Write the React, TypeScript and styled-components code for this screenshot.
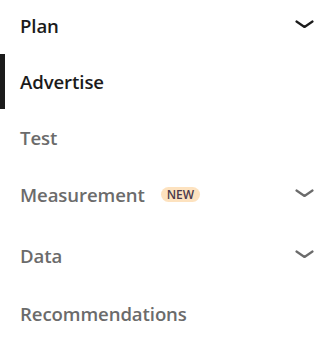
import styled, { createGlobalStyle } from 'styled-components';

const GlobalStyle = createGlobalStyle`
  html, body {
    margin: 0;
    padding: 0;
    background: #ffffff;
  }

  body {
    font-family: 'Open Sans', 'Noto Sans', sans-serif;
  }
`;

const StyledNav = styled.nav`
  width: 333px;
  display: flex;
  flex-direction: column;
`;

const StyledRow = styled.div<{ $h: number; $mb?: number; $active?: boolean; $dark?: boolean }>`
  position: relative;
  height: ${({ $h }) => $h}px;
  margin-bottom: ${({ $mb }) => $mb ?? 0}px;
  padding: 0 19px 0 20px;
  display: flex;
  align-items: center;
  justify-content: space-between;
  color: ${({ $dark }) => ($dark ? '#1b1b1b' : '#6b6b6b')};
  box-sizing: border-box;

  &::before {
    content: '';
    display: ${({ $active }) => ($active ? 'block' : 'none')};
    position: absolute;
    left: 0;
    top: 0;
    bottom: 0;
    width: 5px;
    background: #1b1b1b;
  }
`;

const StyledLabel = styled.span`
  display: flex;
  align-items: center;
  gap: 16px;
  font-size: 18.6px;
  font-weight: 600;
  letter-spacing: -0.1px;
`;

const StyledBadge = styled.span`
  display: inline-flex;
  align-items: center;
  height: 15px;
  padding: 0 6px;
  border-radius: 8px;
  background: #fde2bf;
  color: #4b3a4b;
  font-size: 12px;
  font-weight: 600;
`;

const StyledChevron = styled.svg`
  width: 19px;
  height: 8px;
  margin-top: -3px;
`;

const Chevron = () => (
  <StyledChevron viewBox="0 0 19 8" fill="none">
    <path d="M1.5 1.5l8 5.5 8-5.5" stroke="currentColor" strokeWidth="2.2" strokeLinecap="round" strokeLinejoin="round" />
  </StyledChevron>
);

type Item = {
  label: string;
  h: number;
  mb?: number;
  dark?: boolean;
  active?: boolean;
  chevron?: boolean;
  badge?: string;
};

const items: Item[] = [
  { label: 'Plan', h: 50, mb: 4, dark: true, chevron: true },
  { label: 'Advertise', h: 55, dark: true, active: true },
  { label: 'Test', h: 56 },
  { label: 'Measurement', h: 59, chevron: true, badge: 'NEW' },
  { label: 'Data', h: 62, chevron: true },
  { label: 'Recommendations', h: 55 },
];

const App = () => (
  <>
    <GlobalStyle />
    <StyledNav>
      {items.map((item) => (
        <StyledRow
          key={item.label}
          $h={item.h}
          $mb={item.mb}
          $dark={item.dark}
          $active={item.active}
        >
          <StyledLabel>
            {item.label}
            {item.badge && <StyledBadge>{item.badge}</StyledBadge>}
          </StyledLabel>
          {item.chevron && <Chevron />}
        </StyledRow>
      ))}
    </StyledNav>
  </>
);

export default App;
